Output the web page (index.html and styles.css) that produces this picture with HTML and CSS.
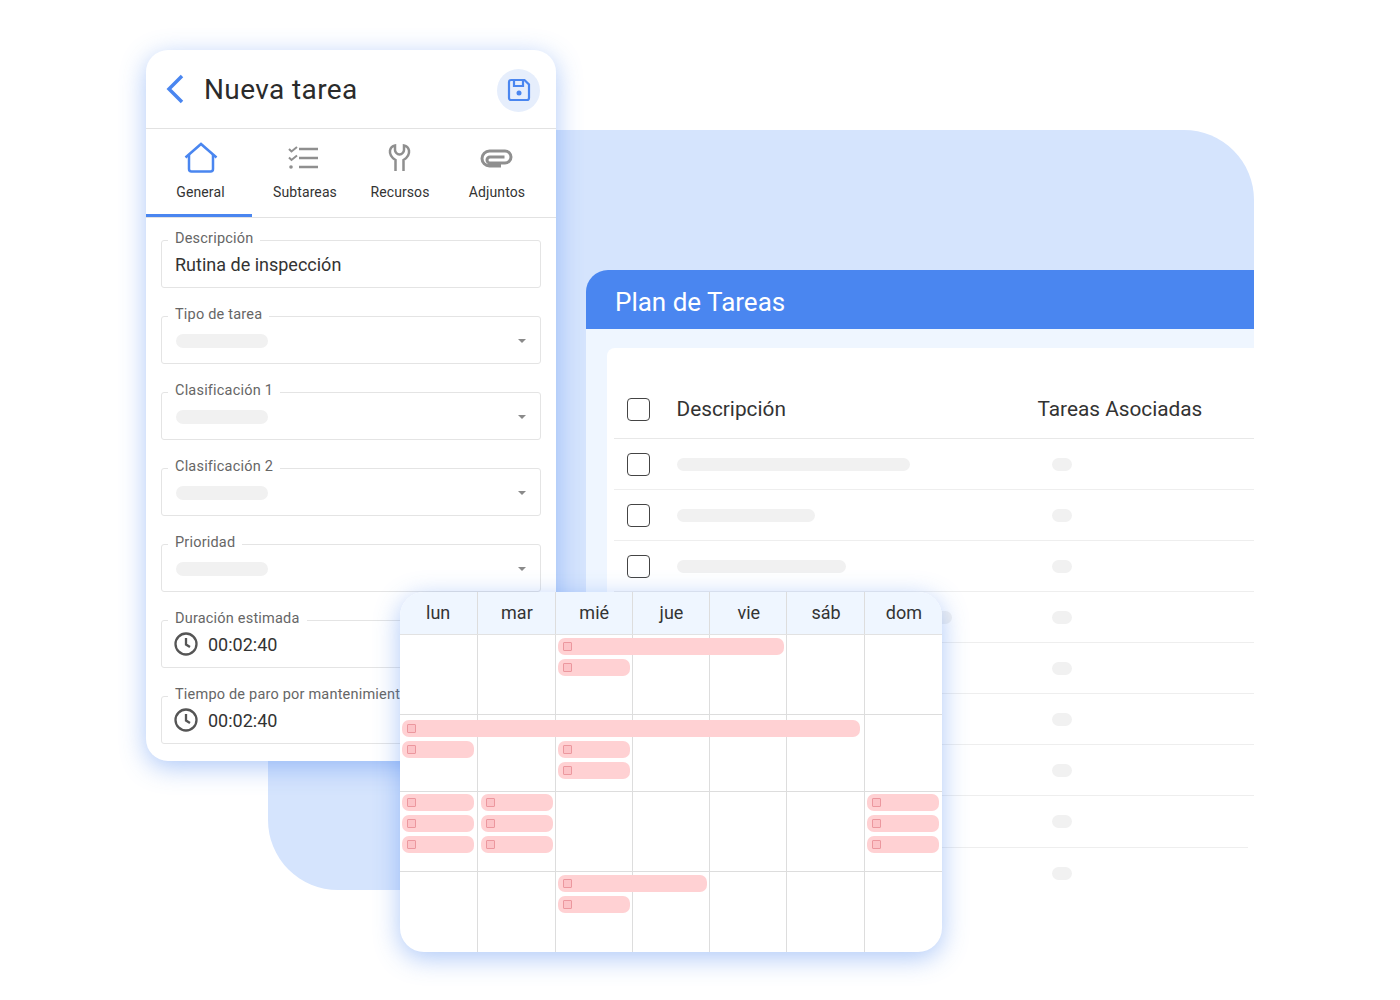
FILE: index.html
```html
<!DOCTYPE html>
<html>
<head>
  <title>Plan de Tareas</title>
  <meta name="viewport" content="width=device-width, initial-scale=1">
  <link rel="stylesheet" href="styles.css">
</head>
<body>
  <div class="stage">
    <div class="backdrop"></div>

    <section class="plan">
      <h2 class="plan-title">Plan de Tareas</h2>
      <div class="plan-body">
        <div class="plan-card">
          <div class="plan-row plan-head">
            <span class="check"></span>
            <span>Descripción</span>
            <span>Tareas Asociadas</span>
          </div>
          <div class="plan-row"><span class="check"></span><span class="bar bar-1"></span><span class="dot"></span></div>
          <div class="plan-row"><span class="check"></span><span class="bar bar-2"></span><span class="dot"></span></div>
          <div class="plan-row"><span class="check"></span><span class="bar bar-3"></span><span class="dot"></span></div>
          <div class="plan-row"><span class="check"></span><span class="bar bar-4"></span><span class="dot"></span></div>
          <div class="plan-row"><span class="check"></span><span class="bar bar-2"></span><span class="dot"></span></div>
          <div class="plan-row"><span class="check"></span><span class="bar bar-3"></span><span class="dot"></span></div>
          <div class="plan-row"><span class="check"></span><span class="bar bar-1"></span><span class="dot"></span></div>
          <div class="plan-row plan-row-short"><span class="check"></span><span class="bar bar-2"></span><span class="dot"></span></div>
          <div class="plan-row plan-row-last"><span class="check"></span><span class="bar bar-3"></span><span class="dot"></span></div>
        </div>
      </div>
    </section>

    <section class="task">
      <header class="task-head">
        <svg class="back" width="20" height="30" viewBox="0 0 20 30"><path d="M17 2 4 15l13 13"/></svg>
        <h1 class="task-title">Nueva tarea</h1>
        <button class="save">
          <svg width="24" height="24" viewBox="0 0 24 24"><path d="M2 4a2 2 0 0 1 2-2h13.5L22 6.500V20a2 2 0 0 1-2 2H4a2 2 0 0 1-2-2z"/><path d="M7 2.500V8h9V2.500"/><circle class="save-dot" cx="12" cy="15" r="2.500"/></svg>
        </button>
      </header>

      <nav class="tabs">
        <a class="tab tab-active">
          <svg width="34" height="32" viewBox="0 0 34 32"><path d="M1.500 15.500 17 2l15.500 13.500"/><path d="M5 12.500V27a2.500 2.500 0 0 0 2.500 2.500h19A2.500 2.500 0 0 0 29 27V12.500"/></svg>
          General
        </a>
        <a class="tab">
          <svg width="34" height="32" viewBox="0 0 34 32"><path d="M11 7h19M11 16h19M11 25h19"/><path class="thin" d="m1 7 2.500 2.500L9 5M1 15.500 3.500 18 9 13.500"/><circle class="fill" cx="3" cy="25" r="1.800"/></svg>
          Subtareas
        </a>
        <a class="tab">
          <svg width="34" height="32" viewBox="0 0 34 32"><path d="M12.500 29V18C8.500 15.500 6.500 12 7 8.500 7.500 6 9 4 12 3.500V8c0 2 2 4.500 4.500 4.500S21 10 21 8V3.500c3 .5 4.500 2.500 5 5 .5 3.500-1.500 7-5.500 9.500V29"/></svg>
          Recursos
        </a>
        <a class="tab tab-clip">
          <svg width="34" height="32" viewBox="0 0 34 32"><path d="M21 24H9.500a7.500 7.500 0 0 1 0-15h15.500a6 6 0 0 1 0 12H10a3 3 0 0 1 0-6h14.500"/></svg>
          Adjuntos
        </a>
      </nav>

      <div class="fields">
        <div class="field">
          <label class="field-label">Descripción</label>
          <span class="field-value">Rutina de inspección</span>
        </div>
        <div class="field">
          <label class="field-label">Tipo de tarea</label>
          <span class="pill"></span><span class="caret"></span>
        </div>
        <div class="field">
          <label class="field-label">Clasificación 1</label>
          <span class="pill"></span><span class="caret"></span>
        </div>
        <div class="field">
          <label class="field-label">Clasificación 2</label>
          <span class="pill"></span><span class="caret"></span>
        </div>
        <div class="field">
          <label class="field-label">Prioridad</label>
          <span class="pill"></span><span class="caret"></span>
        </div>
        <div class="field">
          <label class="field-label">Duración estimada</label>
          <svg class="clock" width="24" height="24" viewBox="0 0 24 24"><circle cx="12" cy="12" r="10.500"/><path d="M12 6v6.500l4 2.500"/></svg>
          <span class="field-value">00:02:40</span>
        </div>
        <div class="field">
          <label class="field-label">Tiempo de paro por mantenimiento</label>
          <svg class="clock" width="24" height="24" viewBox="0 0 24 24"><circle cx="12" cy="12" r="10.500"/><path d="M12 6v6.500l4 2.500"/></svg>
          <span class="field-value">00:02:40</span>
        </div>
      </div>
    </section>

    <section class="calendar">
      <div class="days">
        <span>lun</span><span>mar</span><span>mié</span><span>jue</span><span>vie</span><span>sáb</span><span>dom</span>
      </div>
      <div class="lines">
        <span></span><span></span><span></span><span></span><span></span><span></span><span></span>
      </div>
      <div class="week week-1">
        <div class="event col-3 span-3"><i></i></div>
        <div class="event col-3"><i></i></div>
      </div>
      <div class="week week-2">
        <div class="event col-1 span-6"><i></i></div>
        <div class="event col-1"><i></i></div>
        <div class="event col-3"><i></i></div>
        <div class="event col-3 row-3"><i></i></div>
      </div>
      <div class="week week-3">
        <div class="event col-1"><i></i></div>
        <div class="event col-2"><i></i></div>
        <div class="event col-7"><i></i></div>
        <div class="event col-1"><i></i></div>
        <div class="event col-2"><i></i></div>
        <div class="event col-7"><i></i></div>
        <div class="event col-1"><i></i></div>
        <div class="event col-2"><i></i></div>
        <div class="event col-7"><i></i></div>
      </div>
      <div class="week week-4">
        <div class="event col-3 span-2"><i></i></div>
        <div class="event col-3"><i></i></div>
      </div>
    </section>
  </div>
</body>
</html>
```

FILE: styles.css
```css
*, *::before, *::after {
  box-sizing: border-box;
  margin: 0;
  padding: 0;
}

body {
  font-family: Roboto, "Liberation Sans", sans-serif;
  background-color: #ffffff;
  color: #333333;
}

.stage {
  position: relative;
  width: 1400px;
  height: 1000px;
  overflow: hidden;
}

/* the four big shapes sit on a free canvas and overlap */
.backdrop {
  position: absolute;
  left: 268px;
  top: 130px;
  width: 986px;
  height: 760px;
  background: #d5e4fd;
  border-radius: 0 70px 0 70px;
}

.plan {
  position: absolute;
  left: 586px;
  top: 270px;
  width: 668px;
  height: 620px;
  display: flex;
  flex-direction: column;
  overflow: hidden;
  border-radius: 22px 0 0 0;
}

.plan-title {
  flex: none;
  height: 59px;
  padding: 16px 0 0 29px;
  background: #4a86f0;
  color: #ffffff;
  font-size: 26px;
  font-weight: 400;
  line-height: 32px;
}

.plan-body {
  flex: 1;
  min-height: 0;
  padding: 19px 0 0 21px;
  background: #eff6ff;
}

.plan-card {
  height: 100%;
  padding: 32px 0 0 7px;
  background: #ffffff;
  border-radius: 8px 0 0 0;
}

.plan-row {
  display: grid;
  grid-template-columns: 49.5px 361px 1fr;
  align-items: center;
  height: 51px;
  padding-left: 13px;
  border-bottom: 1px solid #eeeeee;
}

.plan-head {
  height: 59px;
  font-size: 20.8px;
  color: #333333;
  border-bottom-color: #e8e8e8;
}

.plan-row-short {
  width: 634px;
  height: 52px;
}

.plan-row-last {
  border-bottom: none;
}

.check {
  width: 23px;
  height: 23px;
  border: 1.5px solid #444444;
  border-radius: 4px;
  background: #ffffff;
}

.bar {
  height: 13px;
  background: #f1f1f1;
  border-radius: 7px;
}

.bar-1 { width: 233px; }
.bar-2 { width: 138px; }
.bar-3 { width: 169px; }
.bar-4 { width: 275px; }

.dot {
  width: 20px;
  height: 13px;
  margin-left: 14px;
  background: #f1f1f1;
  border-radius: 7px;
}

/* Nueva tarea */
.task {
  position: absolute;
  left: 146px;
  top: 50px;
  width: 410px;
  height: 711px;
  background: #ffffff;
  border-radius: 22px;
  box-shadow: 0 6px 26px rgba(74, 134, 240, 0.45);
}

.task-head {
  display: flex;
  align-items: center;
  height: 79px;
  padding: 0 16px 0 19px;
  border-bottom: 1px solid #e2e2e2;
}

.back {
  flex: none;
  fill: none;
  stroke: #4a86f0;
  stroke-width: 3.5;
}

.task-title {
  flex: 1;
  margin-left: 19px;
  font-size: 28px;
  font-weight: 400;
  letter-spacing: 0.4px;
  color: #2b2b2b;
}

.save {
  display: flex;
  align-items: center;
  justify-content: center;
  width: 43px;
  height: 43px;
  margin-top: 2px;
  border: none;
  border-radius: 50%;
  background: #e6eefc;
}

.save svg {
  fill: none;
  stroke: #4a86f0;
  stroke-width: 2.2;
}

.save .save-dot {
  fill: #4a86f0;
  stroke: none;
}

.tabs {
  display: grid;
  grid-template-columns: 106px 106px 84px 110px;
  height: 89px;
  border-bottom: 1px solid #e2e2e2;
}

.tab {
  display: flex;
  flex-direction: column;
  align-items: center;
  gap: 8px;
  height: 88px;
  padding-top: 13px;
  font-size: 14px;
  letter-spacing: 0.1px;
  line-height: 20px;
  color: #333333;
}

.tab svg {
  fill: none;
  stroke: #8f8f8f;
  stroke-width: 2.5;
}

.tab svg .thin {
  stroke-width: 2;
}

.tab svg .fill {
  fill: #8f8f8f;
  stroke: none;
}

.tab-clip svg {
  stroke-width: 3;
}

.tab-active {
  padding-left: 3px;
  border-bottom: 3px solid #4a86f0;
}

.tab-active svg {
  stroke: #4a86f0;
}

.fields {
  display: flex;
  flex-direction: column;
  gap: 28px;
  padding: 22px 15px 0;
}

.field {
  position: relative;
  display: flex;
  align-items: center;
  gap: 10px;
  height: 48px;
  padding: 0 13px;
  border: 1px solid #e4e4e4;
  border-radius: 3px;
}

.field-label {
  position: absolute;
  left: 6px;
  top: -11px;
  padding: 0 7px;
  background: #ffffff;
  font-size: 14.5px;
  letter-spacing: 0.2px;
  line-height: 18px;
  color: #666666;
  white-space: nowrap;
}

.field-value {
  font-size: 18px;
  color: #333333;
}

.pill {
  width: 92px;
  height: 14px;
  margin: 2px 0 0 1px;
  background: #f1f1f1;
  border-radius: 7px;
}

.caret {
  position: absolute;
  right: 14px;
  top: 22px;
  border: 4.5px solid transparent;
  border-top: 4px solid #8a8a8a;
  border-bottom: none;
}

.clock {
  flex: none;
  margin-left: -1px;
  fill: none;
  stroke: #555555;
  stroke-width: 2.3;
}

/* calendario */
.calendar {
  position: absolute;
  left: 400px;
  top: 592px;
  width: 542px;
  height: 360px;
  overflow: hidden;
  background: #ffffff;
  border-radius: 24px;
  box-shadow: 0 6px 26px rgba(74, 134, 240, 0.45);
}

.days {
  display: grid;
  grid-template-columns: repeat(7, 1fr);
  height: 43px;
  padding-left: 1px;
  background: #eff6ff;
  border-bottom: 1px solid #e2e2e2;
}

.days span {
  font-size: 18px;
  line-height: 42px;
  text-align: center;
  text-indent: 1px;
  color: #333333;
  border-right: 1px solid #dddddd;
}

.days span:first-child {
  text-indent: -2px;
}

.days span:last-child {
  border-right: none;
}

/* column rules, behind the events */
.lines {
  position: absolute;
  left: 1px;
  right: 0;
  top: 43px;
  bottom: 0;
  display: grid;
  grid-template-columns: repeat(7, 1fr);
}

.lines span {
  border-right: 1px solid #dddddd;
}

.lines span:last-child {
  border-right: none;
}

.week {
  position: relative;
  display: grid;
  grid-template-columns: repeat(7, 1fr);
  grid-auto-rows: 17px;
  row-gap: 4px;
  border-bottom: 1px solid #dddddd;
}

.week-1 { height: 80px; padding-top: 3px; }
.week-2 { height: 77px; padding-top: 5px; }
.week-3 { height: 80px; padding-top: 2px; }
.week-4 { height: 80px; padding-top: 3px; border-bottom: none; }

.event {
  display: flex;
  align-items: center;
  margin: 0 3px;
  padding-left: 5px;
  background: #ffd1d3;
  border-radius: 7px;
}

.event i {
  width: 9px;
  height: 9px;
  border: 1px solid #ec979e;
  border-radius: 1px;
  background: #fcc3c7;
}

.col-1 { grid-column: 1; margin-left: 2px; }
.col-2 { grid-column: 2; margin: 0 2px 0 4px; }
.col-3 { grid-column: 3; margin-right: 2px; }
.col-7 { grid-column: 7; margin-left: 2px; }
.col-1.span-6 { grid-column: 1 / span 6; margin-right: 5px; }
.col-3.span-2 { grid-column: 3 / span 2; margin-right: 3px; }
.col-3.span-3 { grid-column: 3 / span 3; margin-right: 3px; }
.row-3 { grid-row: 3; }
```
